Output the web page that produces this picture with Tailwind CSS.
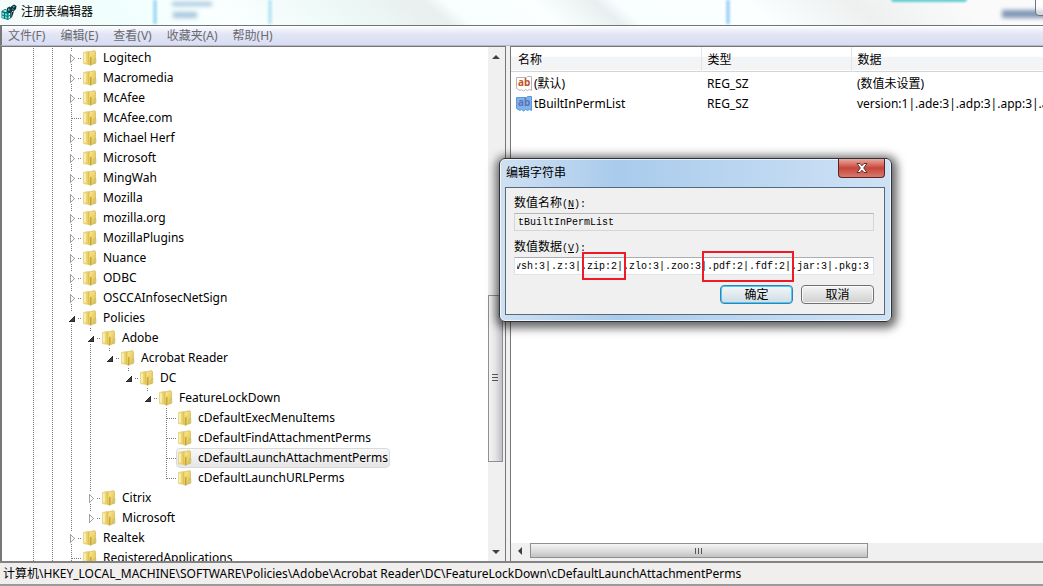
<!DOCTYPE html>
<html lang="zh-CN">
<head>
    <meta charset="UTF-8">
    <meta name="viewport" content="width=device-width, initial-scale=1.0">
    <title>注册表编辑器</title>
    <script src="https://cdn.jsdelivr.net/npm/@tailwindcss/browser@4"></script>
</head>
<body class="relative flex h-screen flex-col overflow-hidden bg-[#f0f0f0] font-['Noto_Sans','Noto_Sans_CJK_SC',sans-serif] text-xs text-black">
    <!-- Shared icons -->
    <svg class="absolute size-0">
        <defs>
            <linearGradient id="fold-a" x1="0" x2="1" y1="0" y2="0">
                <stop offset="0" stop-color="#f8e793"/><stop offset="1" stop-color="#dfc14e"/>
            </linearGradient>
            <linearGradient id="fold-b" x1="0" x2="1" y1="0" y2="1">
                <stop offset="0" stop-color="#fbeb92"/><stop offset="1" stop-color="#e0bd4c"/>
            </linearGradient>
        </defs>
        <symbol id="folder" viewBox="0 0 16 16">
            <path d="M1.500 2.500 6 1.500 8 2v12.500l-6.500-.8z" fill="url(#fold-a)" stroke="#dcc668" stroke-width=".6"/>
            <path d="M7 2 12.500.6 13.500 1.500V13L8 15.500 7 14.500z" fill="url(#fold-b)" stroke="#d2b04a" stroke-width=".6"/>
            <path d="M8 7.500 9.500 6.500v8L8 15.300z" fill="#c9a337"/>
            <path d="M12 9.500 14 8.500V13l-2 1z" fill="#d3d38c" stroke="#b8a94a" stroke-width=".4"/>
            <path d="M3 3.500v9" stroke="#fffbe0" stroke-width="1"/>
        </symbol>
        <symbol id="line-full" viewBox="0 0 19 20">
            <path d="M9.500 0v20" stroke="#7a7a7a" stroke-dasharray="1 1"/>
        </symbol>
        <symbol id="line-top" viewBox="0 0 19 20">
            <path d="M9.500 0v11" stroke="#7a7a7a" stroke-dasharray="1 1"/>
        </symbol>
        <symbol id="stub" viewBox="0 0 19 20">
            <path d="M10 10.500h9" stroke="#7a7a7a" stroke-dasharray="1 1"/>
        </symbol>
        <symbol id="closed" viewBox="0 0 19 20">
            <path d="M7 4h7v12h-7z" fill="#fff"/>
            <path d="M8.500 6.500v8l4-4z" fill="#fff" stroke="#a0a0a0"/>
            <path d="M16 10.500h3" stroke="#7a7a7a" stroke-dasharray="1 1"/>
        </symbol>
        <symbol id="open" viewBox="0 0 19 20">
            <path d="M6 4h8v12h-8z" fill="#fff"/>
            <path d="M12.500 7.500v6h-6z" fill="#404040" stroke="#262626" stroke-width=".8"/>
            <path d="M16 10.500h3" stroke="#7a7a7a" stroke-dasharray="1 1"/>
        </symbol>
    </svg>

    <!-- Title bar -->
    <header class="relative flex h-[26px] shrink-0 items-center overflow-hidden border-b border-[#6f7478] bg-linear-to-r from-[#f4fdfb] via-[#f3f8f7] to-[#f6fafb]">
        <div class="absolute inset-0 bg-[linear-gradient(40deg,transparent_8%,#effffd_12%,#fbffff_22%,#eefaf8_32%,#e8efee_42%,#f8fdfd_44%,#fbffff_52%,#e9eff0_58%,#f9ffff_60%,#fbffff_72%,#eef0f0_82%,#fafafb_92%)]"></div>
        <div class="absolute left-[153px] top-0 h-6 w-1 bg-[#a9dcf3] blur-[1px]"></div>
        <div class="absolute left-[268px] top-0 h-6 w-1 bg-[#bfe7f5] blur-[1px]"></div>
        <div class="absolute left-[172px] top-0.5 h-1 w-10 bg-[#a3c6dc] blur-[2px]"></div>
        <div class="absolute left-[173px] top-3 h-1.5 w-6 bg-[#a6c6da] blur-[2px]"></div>
        <div class="absolute left-[726px] top-0 h-6 w-1 bg-[#a8d6f7] blur-[1px]"></div>
        <div class="absolute left-[891px] -top-1 h-1.5 w-[76px] rounded bg-[#62cfd2] blur-[1px]"></div>
        <div class="absolute left-[1002px] top-2.5 h-2 w-12 bg-[#8097b5] blur-[2px]"></div>
        <div class="absolute -top-1 left-[1035px] h-5 w-6 rounded-bl border border-[#6f7478] bg-white/60"></div>
        <svg class="relative mb-0.5 ml-px size-4" viewBox="0 0 16 16">
            <path d="M0.500 7 4 5l6 2v7l-3 2-6.500-2z" fill="#0b6f72"/>
            <path d="M1 8.500 3 9v2l-2-.5zM4 9.200l2.200.6v2L4 11.300zM1 11.500l2 .6v2L1 13.500zM4 12.300l2.200.5v2L4 14.300z" fill="#5fe3e0"/>
            <path d="M1.500 7 4 6l2.500.7L4.500 8zM7.500 9.500 9 8.700v2l-1.500 1zM7.500 12.500 9 11.700V14l-1.500 1z" fill="#aef6f2"/>
            <path d="M6 4 8.500 2.500 11 4v4L8.500 9 6 7.500z" fill="#113c40"/>
            <path d="M7 4.500 8.500 5v2L7 6.500z" fill="#49c9c8"/>
            <path d="M10 2.500 13 .5 15.500 2 15 5l-2.500 2.500L10 6z" fill="#0e2f33"/>
            <path d="M10.500 8 13 7.500 11 13l-1 1z" fill="#0e2f33"/>
            <path d="M11.500 2.800 13 2l1 .8-1.500 1zM11.300 4.200l1.200.7v1.300l-1.200-.7z" fill="#57d4d2"/>
        </svg>
        <h1 class="relative mb-0.5 ml-1 leading-5">注册表编辑器</h1>
    </header>

    <!-- Menu bar -->
    <nav class="flex h-5 shrink-0 items-center gap-[15px] border-b border-[#b4b8c8] border-l-2 border-l-[#777] bg-linear-to-b from-white via-[#e3e6f5] via-40% to-[#d9ddf2] pl-1.5 text-[#6a6a72]">
        <button class="leading-5">文件(F)</button>
        <button class="leading-5">编辑(E)</button>
        <button class="leading-5">查看(V)</button>
        <button class="leading-5">收藏夹(A)</button>
        <button class="leading-5">帮助(H)</button>
    </nav>

    <main class="flex min-h-0 flex-1 border-b-2 border-[#828282]">
        <!-- Key tree -->
        <section class="flex w-[506px] shrink-0 border border-l-2 border-b-0 border-[#777] bg-white">
            <ul id="tree" class="min-w-0 flex-1 overflow-hidden pl-[22px] pt-px"></ul>
            <div class="flex w-4 flex-col bg-[#f0f0f0]">
                <svg class="h-5 w-4" viewBox="0 0 16 20"><path d="M4 12h8L8 8z" fill="#404040"/></svg>
                <div class="flex-[229]"></div>
                <div class="flex w-[15px] flex-[166] items-center border border-[#8f8f8f] bg-linear-to-r from-[#f4f4f4] via-[#e4e4e7] to-[#bfbfc6]">
                    <svg class="ml-0.5 h-2 w-2" viewBox="0 0 8 8"><path d="M1 .5h6M1 3.500h6M1 6.500h6" stroke="#555"/></svg>
                </div>
                <div class="flex-[82]"></div>
                <svg class="h-[18px] w-4" viewBox="0 0 16 18"><path d="M4 7h8l-4 4z" fill="#404040"/></svg>
            </div>
            <div class="w-px bg-[#f0f0f0]"></div>
        </section>

        <!-- Values -->
        <section class="ml-1 flex min-w-0 flex-1 flex-col border-l border-t border-[#777] bg-white">
            <table class="w-full table-fixed text-left">
                <thead>
                    <tr class="h-6 border-b border-[#d5d5d5] bg-linear-to-b from-white from-40% to-[#f3f4f6] to-45%">
                        <th class="w-[190px] border-r border-[#e3e5e8] pl-[7px] pt-0.5 font-normal leading-4">名称</th>
                        <th class="w-[150px] border-r border-[#e3e5e8] pl-1.5 pt-0.5 font-normal leading-4">类型</th>
                        <th class="pl-1.5 pt-0.5 font-normal leading-4">数据</th>
                    </tr>
                </thead>
                <tbody>
                    <tr class="h-[22px]">
                        <td class="pl-[5px] pt-0.5">
                            <div class="flex items-center gap-0.5 leading-5">
                                <svg class="size-4" viewBox="0 0 16 16">
                                    <path d="M.5 1.500h10l1-1h4v14l-2-1-2 1-2-1-2 1.500-2-1.500-1.500 1L.5 12.500z" fill="#fff" stroke="#b9b4b4"/>
                                    <text x="2" y="10" font-family="Noto Sans" font-size="10" font-weight="700" fill="#c4511f">ab</text>
                                </svg>
                                <span>(默认)</span>
                            </div>
                        </td>
                        <td class="pl-1.5 pt-0.5 leading-5">REG_SZ</td>
                        <td class="whitespace-nowrap pl-1.5 pt-0.5 leading-5">(数值未设置)</td>
                    </tr>
                    <tr class="h-5">
                        <td class="pl-[5px]">
                            <div class="flex items-center gap-0.5 leading-5">
                                <svg class="size-4" viewBox="0 0 16 16">
                                    <path d="M.5 1.500h10l1-1h4v14l-2-1-2 1-2-1-2 1.500-2-1.500-1.500 1L.5 12.500z" fill="#7db4ee" stroke="#5a97dc"/>
                                    <text x="2" y="10" font-family="Noto Sans" font-size="10" font-weight="700" fill="#6472b0">ab</text>
                                </svg>
                                <span>tBuiltInPermList</span>
                            </div>
                        </td>
                        <td class="pl-1.5 leading-5">REG_SZ</td>
                        <td class="overflow-hidden whitespace-nowrap pl-1.5 leading-5">version:1|.ade:3|.adp:3|.app:3|.ar</td>
                    </tr>
                </tbody>
            </table>
            <div class="mt-auto flex h-[18px] items-start bg-[#f0f0f0]">
                <svg class="h-4 w-[19px]" viewBox="0 0 19 16"><path d="M11 4v8L7 8z" fill="#404040"/></svg>
                <div class="flex h-[15px] flex-[337] items-center justify-center border border-[#8f8f8f] bg-linear-to-b from-[#f5f5f5] via-[#dedede] to-[#c2c2c2]">
                    <svg class="h-2 w-2" viewBox="0 0 8 8"><path d="M.5 1v6M3.500 1v6M6.500 1v6" stroke="#555"/></svg>
                </div>
                <div class="flex-[176]"></div>
            </div>
        </section>
    </main>

    <footer class="h-[23px] shrink-0 overflow-hidden whitespace-nowrap border-b-2 border-[#9a9a9a] bg-[#f1eeee] pl-[3px] leading-[21px]">计算机\HKEY_LOCAL_MACHINE\SOFTWARE\Policies\Adobe\Acrobat Reader\DC\FeatureLockDown\cDefaultLaunchAttachmentPerms</footer>

    <!-- Edit string dialog -->
    <form class="absolute left-[499px] top-[158px] w-[393px] rounded-md border border-[#2e3338] bg-linear-to-r from-[#cfe0f2] via-[#a9cbec] via-30% to-[#cfe2f5] pb-1.5 pl-[5px] pr-1.5 shadow-[1px_2px_10px_4px_rgba(0,0,0,0.6)] inset-ring inset-ring-white/70">
        <div class="flex h-[28px] items-start justify-between">
            <h2 class="pl-px pt-1 leading-5">编辑字符串</h2>
            <button type="button" aria-label="关闭" class="flex h-[19px] w-[47px] items-center justify-center rounded-b border border-t-0 border-[#5d2320] bg-linear-to-b from-[#e6aaa0] via-[#c8433a] via-50% to-[#d5796c]">
                <svg class="h-3 w-3.5" viewBox="0 0 14 12"><path d="M2 1.500h3l2 2.300 2-2.300h3L8.700 6l3.300 4.500H9L7 8.200l-2 2.300H2L5.300 6z" fill="#fff" stroke="#5b3533"/></svg>
            </button>
        </div>
        <div class="border border-[#56687c] bg-[#f0f0f0] pb-2.5 pl-2 pr-2.5 pt-[5px]">
            <label for="value-name" class="block h-5 leading-5">数值名称<span class="font-['Liberation_Mono',monospace] text-[10px]">(<u>N</u>):</span></label>
            <input id="value-name" type="text" readonly value="tBuiltInPermList" class="block h-[18px] w-full border border-[#d6d6d6] border-t-[#b5b5b5] bg-[#f0f0f0] px-[3px] font-['Liberation_Mono',monospace] text-[10px]">
            <label for="value-data" class="mt-1.5 block h-5 leading-5">数值数据<span class="font-['Liberation_Mono',monospace] text-[10px]">(<u>V</u>):</span></label>
            <input id="value-data" type="text" value="|.vsh:3|.z:3|.zip:2|.zlo:3|.zoo:3|.pdf:2|.fdf:2|.jar:3|.pkg:3" class="block h-[18px] w-full border border-[#dfe2e6] border-t-[#abadb3] bg-white pl-0.5 pr-1 font-['Liberation_Mono',monospace] text-[10px]">
            <div class="mt-2.5 flex justify-end gap-2">
                <button type="submit" class="h-[19px] w-[73px] rounded-sm border border-[#3c7fb1] bg-linear-to-b from-[#f2f6f8] to-[#cfdde5] leading-4 inset-ring inset-ring-[#46cdf5]">确定</button>
                <button type="button" class="h-[19px] w-[73px] rounded-sm border border-[#707070] bg-linear-to-b from-[#f4f4f4] to-[#cfcfcf] leading-4 inset-ring inset-ring-white/80">取消</button>
            </div>
        </div>
        <!-- Highlight marks -->
        <div class="absolute left-[82px] top-[93px] h-[28px] w-[44px] border-2 border-[#ed1c24]"></div>
        <div class="absolute left-[202px] top-[92px] h-[31px] w-[92px] border-2 border-[#ed1c24]"></div>
    </form>

    <script>
        // Guides per row: "|" line, "+" collapsed, "-" expanded, "_" expanded last child,
        // "t" leaf, "l" last leaf, "." empty
        const rows = [
            ['||+', 'Logitech'],
            ['||+', 'Macromedia'],
            ['||+', 'McAfee'],
            ['||t', 'McAfee.com'],
            ['||+', 'Michael Herf'],
            ['||+', 'Microsoft'],
            ['||+', 'MingWah'],
            ['||+', 'Mozilla'],
            ['||+', 'mozilla.org'],
            ['||+', 'MozillaPlugins'],
            ['||+', 'Nuance'],
            ['||+', 'ODBC'],
            ['||+', 'OSCCAInfosecNetSign'],
            ['||-', 'Policies'],
            ['|||-', 'Adobe'],
            ['||||_', 'Acrobat Reader'],
            ['||||._', 'DC'],
            ['||||.._', 'FeatureLockDown'],
            ['||||...t', 'cDefaultExecMenuItems'],
            ['||||...t', 'cDefaultFindAttachmentPerms'],
            ['||||...t', 'cDefaultLaunchAttachmentPerms', true],
            ['||||...l', 'cDefaultLaunchURLPerms'],
            ['|||+', 'Citrix'],
            ['|||\\', 'Microsoft'],
            ['||+', 'Realtek'],
            ['||t', 'RegisteredApplications']
        ];
        const parts = {
            '|': ['line-full'],
            '+': ['line-full', 'closed'],
            '\\': ['line-top', 'closed'],
            '-': ['line-full', 'open'],
            '_': ['line-top', 'open'],
            't': ['line-full', 'stub'],
            'l': ['line-top', 'stub'],
            '.': []
        };
        document.getElementById('tree').innerHTML = rows.map(([guides, name, selected]) => `
            <li class="flex h-5 whitespace-nowrap">
                ${[...guides].map(g => `<svg class="h-5 w-[19px] shrink-0" shape-rendering="crispEdges">${parts[g].map(p => `<use href="#${p}" width="19" height="20"/>`).join('')}</svg>`).join('')}
                <span class="flex items-center gap-[5px] rounded-sm border pr-px leading-4 ${selected ? 'border-[#dadada] bg-linear-to-b from-[#f8f8f8] to-[#e6e6e6]' : 'border-transparent'}">
                    <svg class="size-4"><use href="#folder" width="16" height="16"/></svg>${name}
                </span>
            </li>`).join('');

        // Keep the end of the value in view
        const data = document.getElementById('value-data');
        data.scrollLeft = data.scrollWidth;
    </script>
</body>
</html>
